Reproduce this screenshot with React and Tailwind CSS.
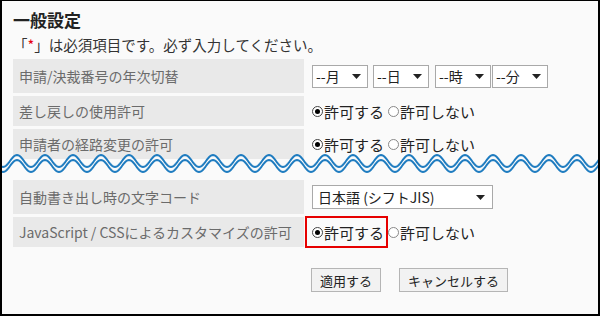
import React from 'react';

const FONT = "font-['Noto_Sans_CJK_JP','Noto_Sans',sans-serif]";

// one sine-ish wave line, peaks every 28px
const waveLine = (offset) => {
  let d = '';
  for (let x = -2; x <= 602; x += 1) {
    const y = 11 + offset - 6 * Math.cos((2 * Math.PI * (x - 17)) / 28);
    d += `${x === -2 ? 'M' : 'L'}${x} ${y.toFixed(2)} `;
  }
  return d;
};

const Arrow = ({ className = '' }) => (
  <svg width="9" height="5" viewBox="0 0 9 5" className={className}>
    <polygon points="0,0 9,0 4.5,5" fill="#222" />
  </svg>
);

const Select = ({ label, width, className = '' }) => (
  <div
    className={`flex items-center justify-between h-[23px] bg-white border border-[#a9a9a9] pl-[3px] pr-[6px] text-[14px] text-[#222] ${className}`}
    style={{ width }}
  >
    <span className="leading-none">{label}</span>
    <Arrow />
  </div>
);

const Radio = ({ checked, label }) => (
  <span className="flex items-center text-[15px] text-[#222] leading-none">
    <span
      className={`w-[11px] h-[11px] rounded-full border flex items-center justify-center mr-[1px] ${
        checked ? 'border-[#444]' : 'border-[#888]'
      } bg-white`}
    >
      {checked && <span className="w-[5px] h-[5px] rounded-full bg-black" />}
    </span>
    {label}
  </span>
);

const Row = ({ label, children, height }) => (
  <div className="flex" style={{ height }}>
    <div className="w-[291px] bg-[#e9e9e9] flex items-center pl-[6px] text-[14px] text-[#6b6b6b] leading-none">
      {label}
    </div>
    <div className="flex-1 flex items-center pl-[8px]">{children}</div>
  </div>
);

const RadioPair = () => (
  <div className="flex items-center gap-[4px]">
    <Radio checked label="許可する" />
    <Radio label="許可しない" />
  </div>
);

const App = () => {
  return (
    <div
      className={`w-[600px] h-[316px] bg-[#fafafa] border-black border-t border-l-2 border-r-2 border-b-2 overflow-hidden ${FONT}`}
    >
      <div className="pl-[11px] pt-[8px]">
        <h1 className="text-[17px] font-bold leading-[22px] text-[#222]">一般設定</h1>
        <p className="mt-[4px] text-[14.5px] leading-[20px] text-[#333]">
          「<span className="text-[#e60012]">*</span>」は必須項目です。必ず入力してください。
        </p>

        <div className="mt-[4px] flex flex-col gap-[3px]">
          <Row label="申請/決裁番号の年次切替" height={34}>
            <Select label="--月" width={56} />
            <Select label="--日" width={56} className="ml-[5px]" />
            <Select label="--時" width={56} className="ml-[6px]" />
            <Select label="--分" width={56} className="ml-[1px]" />
          </Row>
          <Row label="差し戻しの使用許可" height={30}>
            <RadioPair />
          </Row>
          <Row label="申請者の経路変更の許可" height={30}>
            <RadioPair />
          </Row>
        </div>
      </div>

      {/* cut mark across the table */}
      <div className="relative z-10 -mx-[2px] -mt-[9px] h-[28px]">
        <svg width="600" height="28" viewBox="0 0 600 28" className="block">
          <path d={`${waveLine(0)} L602 28 L-2 28 Z`} fill="#fafafa" />
          <path d={waveLine(0)} fill="none" stroke="#1f7cc0" strokeWidth="2" />
          <path d={waveLine(5)} fill="none" stroke="#1f7cc0" strokeWidth="2" />
        </svg>
      </div>

      <div className="pl-[11px]">
        <div className="mt-[2px] flex flex-col gap-[3px]">
          <Row label="自動書き出し時の文字コード" height={34}>
            <div className="flex items-center justify-between w-[181px] h-[24px] bg-white border border-[#a9a9a9] pl-[5px] pr-[7px] text-[14px] text-[#222]">
              <span className="leading-none">日本語 (シフトJIS)</span>
              <Arrow />
            </div>
          </Row>
          <div className="flex h-[30px]">
            <div className="w-[291px] bg-[#e9e9e9] flex items-center pl-[6px] text-[14px] text-[#6b6b6b] leading-none">
              JavaScript / CSSによるカスタマイズの許可
            </div>
            <div className="flex-1 flex items-center">
              <div className="ml-[1px] h-[32px] -my-[1px] border-2 border-[#e60000] flex items-center pl-[5px] pr-[2px]">
                <Radio checked label="許可する" />
              </div>
              <Radio label="許可しない" />
            </div>
          </div>
        </div>

        <div className="mt-[21px] ml-[298px] flex gap-[18px]">
          <button className="h-[24px] px-[8px] bg-[#f2f2f2] border border-[#b5b5b5] text-[13px] text-[#222] leading-none">
            適用する
          </button>
          <button className="h-[24px] px-[8px] bg-[#f2f2f2] border border-[#b5b5b5] text-[13px] text-[#222] leading-none">
            キャンセルする
          </button>
        </div>
      </div>
    </div>
  );
};

export default App;
